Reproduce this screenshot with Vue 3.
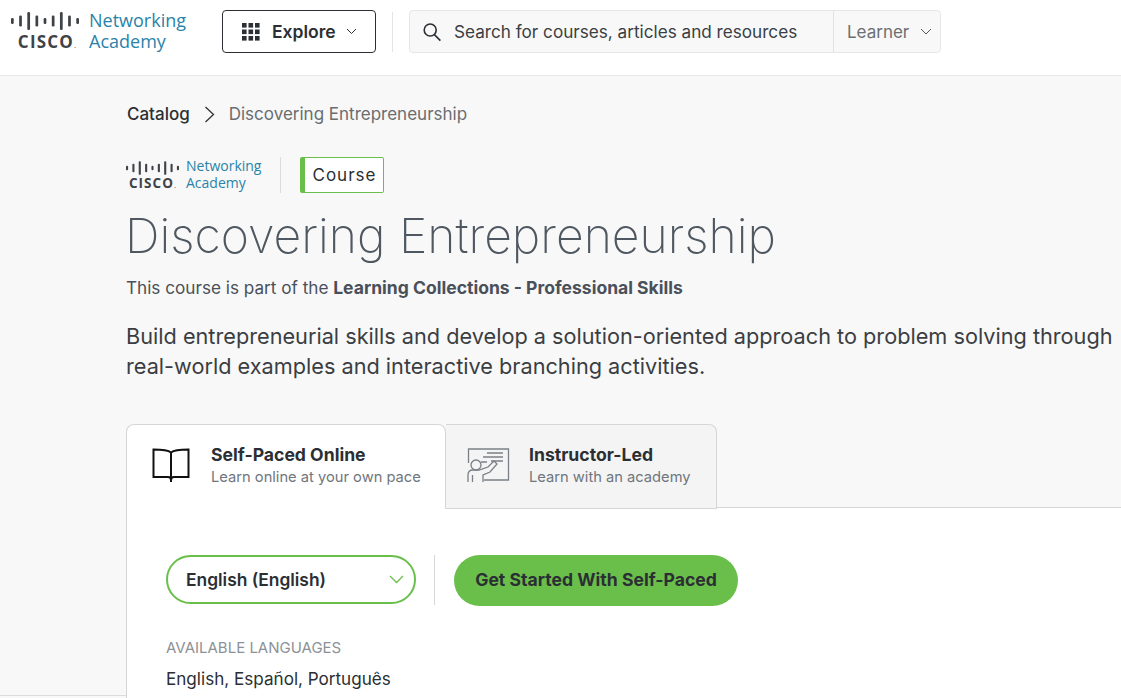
<template>
  <div class="page">
    <!-- header -->
    <header class="topbar">
      <div class="logo">
        <div class="cisco">
          <svg width="68" height="18" viewBox="0 0 70 18" preserveAspectRatio="none">
            <g fill="#3f4347">
              <rect v-for="b in bars" :key="b.x" :x="b.x" :y="9 - b.h / 2" width="2.8" :height="b.h" rx="1.2" />
            </g>
          </svg>
          <span class="cisco-word">CISCO<i>.</i></span>
        </div>
        <div class="netacad">Networking<br />Academy</div>
      </div>
      <button class="explore">
        <svg width="18" height="18" viewBox="0 0 18 18" fill="#2b2f33">
          <template v-for="x in [0, 6.5, 13]" :key="x">
            <rect v-for="y in [0, 6.5, 13]" :key="y" :x="x" :y="y" width="4.6" height="4.6" />
          </template>
        </svg>
        <span>Explore</span>
        <svg width="11" height="7" viewBox="0 0 11 7" fill="none" stroke="#2b2f33" stroke-width="1"><path d="M1 1l4.5 4.5L10 1" /></svg>
      </button>
      <div class="divider"></div>
      <div class="search">
        <div class="search-input">
          <svg width="20" height="20" viewBox="0 0 20 20" fill="none" stroke="#2b2f33" stroke-width="1.6"><circle cx="8.2" cy="8" r="6" /><path d="M12.4 12.6l6 6" /></svg>
          <span>Search for courses, articles and resources</span>
        </div>
        <div class="search-role">
          <span>Learner</span>
          <svg width="12" height="7" viewBox="0 0 12 7" fill="none" stroke="#555" stroke-width="1"><path d="M1 1l5 5 5-5" /></svg>
        </div>
      </div>
    </header>

    <div class="body-row">
      <div class="gutter"></div>
      <main class="content">
        <nav class="crumbs">
          <span class="crumb-root">Catalog</span>
          <svg width="11" height="17" viewBox="0 0 11 17" fill="none" stroke="#333" stroke-width="1.3"><path d="M1.500 1l8 7.500-8 7.500" /></svg>
          <span class="crumb-here">Discovering Entrepreneurship</span>
        </nav>

        <div class="brand">
          <div class="logo logo-sm">
            <div class="cisco">
              <svg width="53" height="14" viewBox="0 0 70 18">
                <g fill="#3f4347">
                  <rect v-for="b in bars" :key="b.x" :x="b.x" :y="9 - b.h / 2" width="2.8" :height="b.h" rx="1.2" />
                </g>
              </svg>
              <span class="cisco-word">CISCO<i>.</i></span>
            </div>
            <div class="netacad">Networking<br />Academy</div>
          </div>
          <div class="brand-sep"></div>
          <div class="badge">Course</div>
        </div>

        <h1>Discovering Entrepreneurship</h1>
        <p class="part-of">This course is part of the <b>Learning Collections - Professional Skills</b></p>
        <p class="lead">Build entrepreneurial skills and develop a solution-oriented approach to problem solving through real-world examples and interactive branching activities.</p>

        <div class="tabs">
          <div class="tab tab-active">
            <svg width="38" height="36" viewBox="0 0 38 36" fill="none" stroke="#111" stroke-width="2"><path d="M19 5.500C16 3 10 2.500 1.500 2.500V30H16c1.500 0 3 1 3 3 0-2 1.500-3 3-3h14.500V2.500C28 2.500 22 3 19 5.500zM19 5.500V35" /></svg>
            <div>
              <div class="tab-title">Self-Paced Online</div>
              <div class="tab-sub">Learn online at your own pace</div>
            </div>
          </div>
          <div class="tab tab-other">
            <svg width="43" height="36" viewBox="0 0 43 36" fill="none" stroke="#7a8086" stroke-width="1.300">
              <path d="M1.500 16V2h40v31H17" />
              <path d="M20 6h16M16 10h20M24 14h12M14 15h6" />
              <circle cx="9" cy="18" r="5" />
              <path d="M1 35v-7c0-3 2-5 5-5h6l9-3 6-6 3 3-7 8-7 3v7M5.500 28v7" />
            </svg>
            <div>
              <div class="tab-title">Instructor-Led</div>
              <div class="tab-sub">Learn with an academy</div>
            </div>
          </div>
        </div>

        <section class="panel">
          <div class="actions">
            <div class="lang-select">
              <span>English (English)</span>
              <svg width="15" height="9" viewBox="0 0 15 9" fill="none" stroke="#6abf4b" stroke-width="1.300"><path d="M1 1l6.500 6.500L14 1" /></svg>
            </div>
            <div class="action-sep"></div>
            <button class="start">Get Started With Self-Paced</button>
          </div>
          <div class="avail-label">AVAILABLE LANGUAGES</div>
          <div class="avail-list">English, Español, Português</div>
        </section>
      </main>
    </div>
  </div>
</template>

<script setup>
// cisco bars, left to right
const bars = [
  { x: 0, h: 6 }, { x: 8.4, h: 11 }, { x: 16.800, h: 18 }, { x: 25.200, h: 11 }, { x: 33.600, h: 6 },
  { x: 42, h: 11 }, { x: 50.400, h: 18 }, { x: 58.800, h: 11 }, { x: 67.200, h: 6 },
]
</script>

<style>
html, body { margin: 0; height: 100%; overflow: hidden; background: #f8f8f8; }
</style>

<style scoped>
.page {
  width: 1121px;
  height: 698px;
  overflow: hidden;
  font-family: Inter, "Liberation Sans", sans-serif;
  color: #2b2f33;
  background: #f8f8f8;
}
.topbar {
  display: flex;
  align-items: center;
  height: 63px;
  padding: 0 0 12px 11px;
  background: #fff;
  border-bottom: 1px solid #e8e8e8;
}
.logo { display: flex; align-items: center; gap: 10px; width: 211px; }
.cisco { display: flex; flex-direction: column; align-items: center; width: 68px; }
.cisco svg { display: block; }
.cisco-word {
  font-family: "Open Sans", sans-serif;
  font-size: 17px;
  line-height: 15px;
  font-weight: 700;
  letter-spacing: 1.200px;
  color: #3f4347;
  margin-top: 4px;
  padding-left: 4px;
}
.cisco-word i { font-size: 8px; font-weight: 400; font-style: normal; letter-spacing: 0; }
.netacad {
  font-family: "Open Sans", sans-serif;
  font-size: 18px;
  line-height: 21px;
  color: #2a83a8;
  margin-top: -2px;
}
.explore {
  display: flex;
  align-items: center;
  width: 154px;
  height: 43px;
  padding: 0 0 0 19px;
  box-sizing: border-box;
  background: #fff;
  border: 1px solid #2b2f33;
  border-radius: 4px;
  font: 600 17.500px Inter, sans-serif;
  color: #2b2f33;
}
.explore span { margin: 0 10px 0 12px; }
.divider { width: 1px; height: 40px; margin: 0 16px; background: #e4e4e4; }
.search {
  display: flex;
  width: 532px;
  height: 43px;
  box-sizing: border-box;
  background: #f8f8f8;
  border: 1px solid #e6e6e6;
  border-radius: 4px;
}
.search-input {
  display: flex;
  align-items: center;
  gap: 12px;
  width: 424px;
  padding-left: 12px;
  box-sizing: border-box;
  border-right: 1px solid #e2e2e2;
  font-size: 17.150px;
  color: #3a3f44;
}
.search-role {
  display: flex;
  align-items: center;
  gap: 11px;
  padding-left: 13px;
  font-size: 17px;
  color: #6b6f73;
}
.body-row { display: flex; }
.gutter { flex: none; width: 126px; height: 619px; border-bottom: 1px solid #dcdcdc; }
.content { flex: 1; min-width: 0; }
.crumbs { display: flex; align-items: center; height: 24px; margin-top: 26px; padding-left: 1px; }
.crumb-root { font-size: 17px; font-weight: 500; color: #2b2f33; }
.crumbs svg { margin: 0 14px 0 14px; }
.crumb-here { font-size: 17px; color: #6a6d70; }
.brand { display: flex; align-items: center; height: 38px; margin-top: 30px; }
.logo-sm { width: auto; gap: 7px; }
.logo-sm .cisco { width: 53px; }
.logo-sm .cisco-word { font-size: 13.500px; line-height: 11px; margin-top: 3px; padding-left: 0; letter-spacing: 1px; }
.logo-sm .netacad { font-size: 14px; line-height: 17px; margin-top: -2px; }
.brand-sep { width: 1px; height: 36px; margin: 0 19px; background: #dcdcdc; }
.badge {
  box-sizing: border-box;
  width: 84px;
  height: 36px;
  padding-left: 7px;
  line-height: 34px;
  background: #fff;
  border: 1px solid #6abf4b;
  border-left-width: 5px;
  border-radius: 2px;
  font-size: 17px;
  letter-spacing: 1px;
  color: #2b2f33;
}
h1 {
  margin: 12px 0 0 -1px;
  font-size: 48.100px;
  line-height: 60px;
  font-weight: 200;
  color: #4f5761;
}
.part-of { margin: 10px 0 0; font-size: 17.150px; line-height: 24px; color: #4a5059; }
.part-of b { font-size: 17.550px; font-weight: 700; }
.lead { margin: 21px 0 0; width: 995px; font-size: 21.700px; line-height: 30px; color: #3a3e42; }
.tabs { display: flex; margin-top: 43px; }
.tab { display: flex; box-sizing: border-box; border: 1px solid #d6d6d6; border-radius: 8px 8px 0 0; }
.tab-active {
  width: 320px;
  height: 85px;
  padding: 22px 0 0 25px;
  gap: 21px;
  background: #fff;
  border-bottom: none;
  position: relative;
  z-index: 1;
}
.tab-other {
  width: 271px;
  height: 85px;
  padding: 22px 0 0 21px;
  gap: 19px;
  background: #f4f4f4;
  border-left: none;
  border-radius: 0 8px 0 0;
  position: relative;
  z-index: 1;
}
.tab-active > div, .tab-other > div { margin-top: -2px; }
.tab-title { font-size: 17.600px; line-height: 20px; font-weight: 700; color: #2b2f33; }
.tab-sub { margin-top: 2px; font-size: 14.700px; line-height: 20px; color: #6f767d; }
.panel {
  box-sizing: border-box;
  height: 300px;
  margin-top: -2px;
  padding: 47px 0 0 39px;
  background: #fff;
  border: 1px solid #d6d6d6;
  border-right: none;
}
.actions { display: flex; align-items: flex-start; }
.lang-select {
  display: flex;
  align-items: center;
  justify-content: space-between;
  box-sizing: border-box;
  width: 250px;
  height: 49px;
  padding: 0 10px 0 18px;
  background: #fff;
  border: 2px solid #6abf4b;
  border-radius: 25px;
  font-size: 17.400px;
  font-weight: 600;
  color: #2b2f33;
}
.action-sep { width: 1px; height: 50px; margin: 0 19px 0 18px; background: #d6d6d6; }
.start {
  width: 284px;
  height: 51px;
  padding: 0 0 2px;
  border: none;
  border-radius: 26px;
  background: #6abf4b;
  font: 700 17.600px Inter, sans-serif;
  color: #2b2f33;
}
.avail-label { margin-top: 31px; font-size: 15px; line-height: 22px; color: #8d9196; }
.avail-list { margin-top: 9px; font-size: 17.100px; line-height: 22px; color: #2b2f33; }
</style>
